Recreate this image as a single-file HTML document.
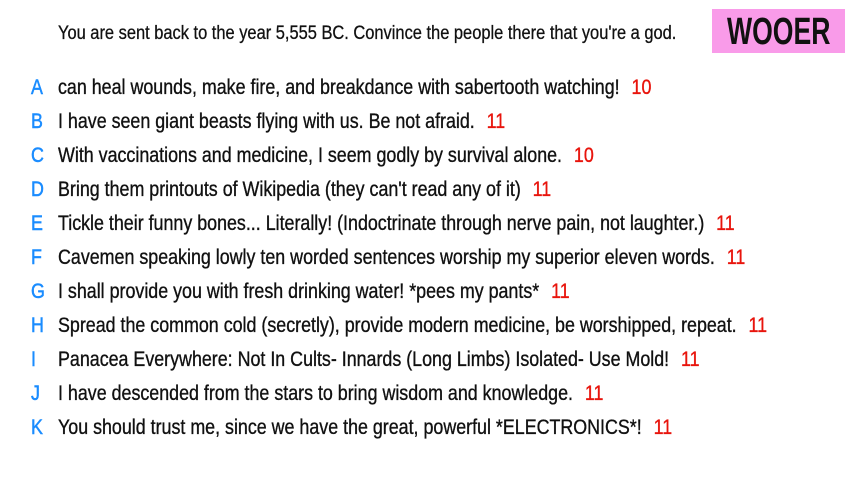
<!DOCTYPE html>
<html><head><meta charset="utf-8"><style>
body{margin:0;width:853px;height:480px;background:#fff;position:relative;overflow:hidden;font-family:"Liberation Sans",sans-serif;color:#111}
.h{position:absolute;left:58px;top:23px;font-size:19px;white-space:nowrap;transform:scaleX(0.865);transform-origin:0 0;-webkit-text-stroke:0.3px #111}
.box{position:absolute;left:712px;top:9px;width:133px;height:44px;background:#f99be9}
.box span{position:absolute;left:15px;top:0;font-size:38px;line-height:46px;font-weight:bold;color:#111;transform:scaleX(0.7);transform-origin:0 0;white-space:nowrap}
.r{position:absolute;left:0;font-size:21px;white-space:nowrap;line-height:24px;-webkit-text-stroke:0.35px #111}
.r b{position:absolute;left:31px;color:#1a8cff;font-weight:normal;transform:scaleX(0.85);transform-origin:0 0;-webkit-text-stroke:0.5px #1a8cff}
.r span.t{position:absolute;left:58px;transform:scaleX(0.85);transform-origin:0 0}
.r i{font-style:normal;color:#e8140c;margin-left:14px;-webkit-text-stroke:0.35px #e8140c}
</style></head><body>
<div class="h">You are sent back to the year 5,555 BC. Convince the people there that you're a god.</div>
<div class="box"><span>WOOER</span></div>
<div class="r" style="top:76px"><b>A</b><span class="t">can heal wounds, make fire, and breakdance with sabertooth watching!<i>10</i></span></div>
<div class="r" style="top:110px"><b>B</b><span class="t">I have seen giant beasts flying with us. Be not afraid.<i>11</i></span></div>
<div class="r" style="top:144px"><b>C</b><span class="t">With vaccinations and medicine, I seem godly by survival alone.<i>10</i></span></div>
<div class="r" style="top:178px"><b>D</b><span class="t">Bring them printouts of Wikipedia (they can't read any of it)<i>11</i></span></div>
<div class="r" style="top:212px"><b>E</b><span class="t">Tickle their funny bones... Literally! (Indoctrinate through nerve pain, not laughter.)<i>11</i></span></div>
<div class="r" style="top:246px"><b>F</b><span class="t">Cavemen speaking lowly ten worded sentences worship my superior eleven words.<i>11</i></span></div>
<div class="r" style="top:280px"><b>G</b><span class="t">I shall provide you with fresh drinking water! *pees my pants*<i>11</i></span></div>
<div class="r" style="top:314px"><b>H</b><span class="t">Spread the common cold (secretly), provide modern medicine, be worshipped, repeat.<i>11</i></span></div>
<div class="r" style="top:348px"><b>I</b><span class="t">Panacea Everywhere: Not In Cults- Innards (Long Limbs) Isolated- Use Mold!<i>11</i></span></div>
<div class="r" style="top:382px"><b>J</b><span class="t">I have descended from the stars to bring wisdom and knowledge.<i>11</i></span></div>
<div class="r" style="top:416px"><b>K</b><span class="t">You should trust me, since we have the great, powerful *ELECTRONICS*!<i>11</i></span></div>
</body></html>
